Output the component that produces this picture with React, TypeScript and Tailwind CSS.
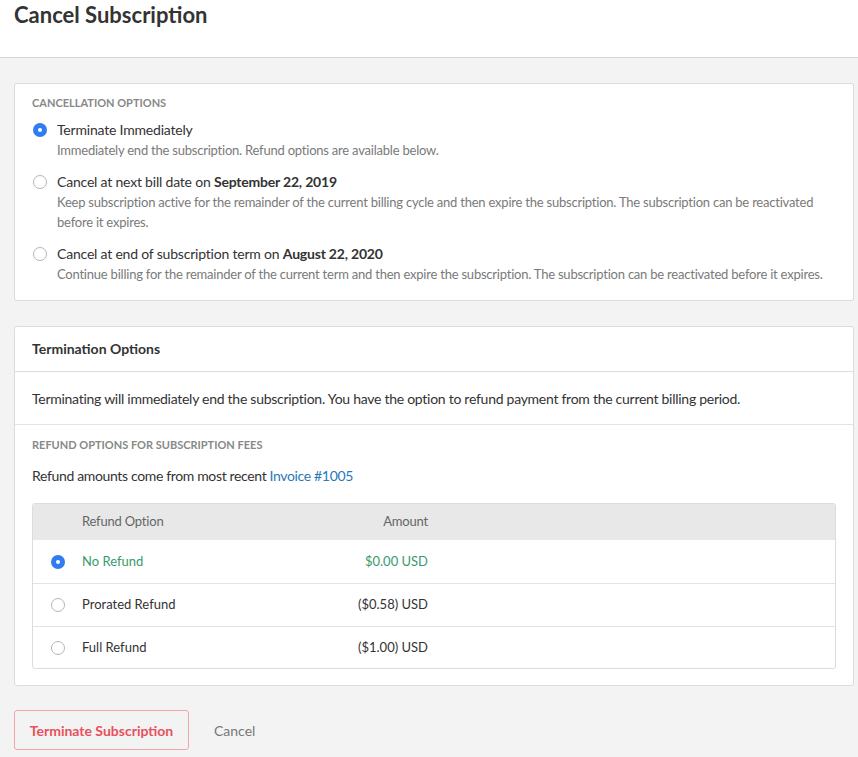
import React from "react";

function Radio({ checked }: { checked?: boolean }) {
  return checked ? (
    <span className="flex h-[14px] w-[14px] shrink-0 items-center justify-center rounded-full bg-[#2f7df0]">
      <span className="h-[4px] w-[4px] rounded-full bg-white" />
    </span>
  ) : (
    <span className="h-[14px] w-[14px] shrink-0 rounded-full border border-[#b5b5b5] bg-white" />
  );
}

function Option({
  checked,
  label,
  desc,
}: {
  checked?: boolean;
  label: React.ReactNode;
  desc: React.ReactNode;
}) {
  return (
    <div className="flex gap-[10px]">
      <div className="flex h-[20px] items-center pl-[1px]">
        <Radio checked={checked} />
      </div>
      <div className="flex flex-col">
        <div className="text-[14px] leading-[20px] tracking-[-0.2px] text-[#333]">{label}</div>
        <div className="text-[13px] leading-[20px] tracking-[-0.22px] text-[#7a7a7a]">{desc}</div>
      </div>
    </div>
  );
}

const rows = [
  { name: "No Refund", amount: "$0.00 USD", checked: true, h: "h-[43px]" },
  { name: "Prorated Refund", amount: "($0.58) USD", h: "h-[43px] border-t border-[#e3e3e3]" },
  { name: "Full Refund", amount: "($1.00) USD", h: "h-[42px] border-t border-[#e3e3e3]" },
];

export default function App() {
  return (
    <div
      className="min-h-[757px] bg-[#f3f3f3] text-[#333]"
      style={{ fontFamily: "Lato, 'Liberation Sans', sans-serif" }}
    >
      <div className="h-[58px] border-b border-[#d6d6d6] bg-white px-[14px] pt-[1px]">
        <h1 className="text-[22px] font-bold leading-[28px] text-[#333]">Cancel Subscription</h1>
      </div>

      <div className="ml-[14px] mr-[4px] pt-[25px]">
        <div className="rounded-[3px] border border-[#dcdcdc] bg-white px-[17px] pb-[16px] pt-[9px]">
          <div className="mb-[7px] text-[11px] font-bold uppercase leading-[20px] text-[#888]">
            Cancellation Options
          </div>
          <div className="flex flex-col gap-[12px]">
            <Option
              checked
              label="Terminate Immediately"
              desc="Immediately end the subscription. Refund options are available below."
            />
            <Option
              label={
                <>
                  Cancel at next bill date on <b className="font-bold">September 22, 2019</b>
                </>
              }
              desc={
                <>
                  Keep subscription active for the remainder of the current billing cycle and then expire the subscription. The subscription can be reactivated
                  <br />
                  before it expires.
                </>
              }
            />
            <Option
              label={
                <>
                  Cancel at end of subscription term on <b className="font-bold">August 22, 2020</b>
                </>
              }
              desc="Continue billing for the remainder of the current term and then expire the subscription. The subscription can be reactivated before it expires."
            />
          </div>
        </div>

        <div className="mt-[25px] rounded-[3px] border border-[#dcdcdc] bg-white">
          <div className="flex h-[45px] items-center border-b border-[#dcdcdc] px-[17px] pb-[1px] text-[14px] font-bold">
            Termination Options
          </div>
          <div className="flex h-[53px] items-center whitespace-nowrap border-b border-[#e3e3e3] px-[17px] text-[14px] tracking-[-0.27px]">
            Terminating will immediately end the subscription. You have the option to refund payment from the current billing period.
          </div>
          <div className="px-[17px] pb-[16px] pt-[10px]">
            <div className="text-[11px] font-bold uppercase leading-[20px] text-[#888]">
              Refund Options for Subscription Fees
            </div>
            <div className="mt-[11px] text-[14px] leading-[20px] tracking-[-0.35px]">
              Refund amounts come from most recent{" "}
              <a className="text-[#2a78b8]" href="#">
                Invoice #1005
              </a>
            </div>
            <div className="mt-[17px] overflow-hidden rounded-[3px] border border-[#dcdcdc]">
              <div className="grid h-[36px] grid-cols-[49px_200px_146px_1fr] items-center bg-[#e8e8e8] text-[13px] tracking-[-0.2px] text-[#666]">
                <div />
                <div>Refund Option</div>
                <div className="text-right">Amount</div>
                <div />
              </div>
              {rows.map((r) => (
                <div
                  key={r.name}
                  className={`grid grid-cols-[49px_200px_146px_1fr] items-center text-[13px] ${r.h} ${
                    r.checked ? "text-[#3a9a6a]" : "text-[#333]"
                  }`}
                >
                  <div className="flex justify-center">
                    <Radio checked={r.checked} />
                  </div>
                  <div>{r.name}</div>
                  <div className="text-right">{r.amount}</div>
                  <div />
                </div>
              ))}
            </div>
          </div>
        </div>

        <div className="mt-[24px] flex items-center gap-[25px]">
          <button className="h-[40px] w-[175px] rounded-[3px] border border-[#f3a4a8] text-[14px] font-bold text-[#e8505b]">
            Terminate Subscription
          </button>
          <span className="text-[14px] text-[#777]">Cancel</span>
        </div>
      </div>
    </div>
  );
}
